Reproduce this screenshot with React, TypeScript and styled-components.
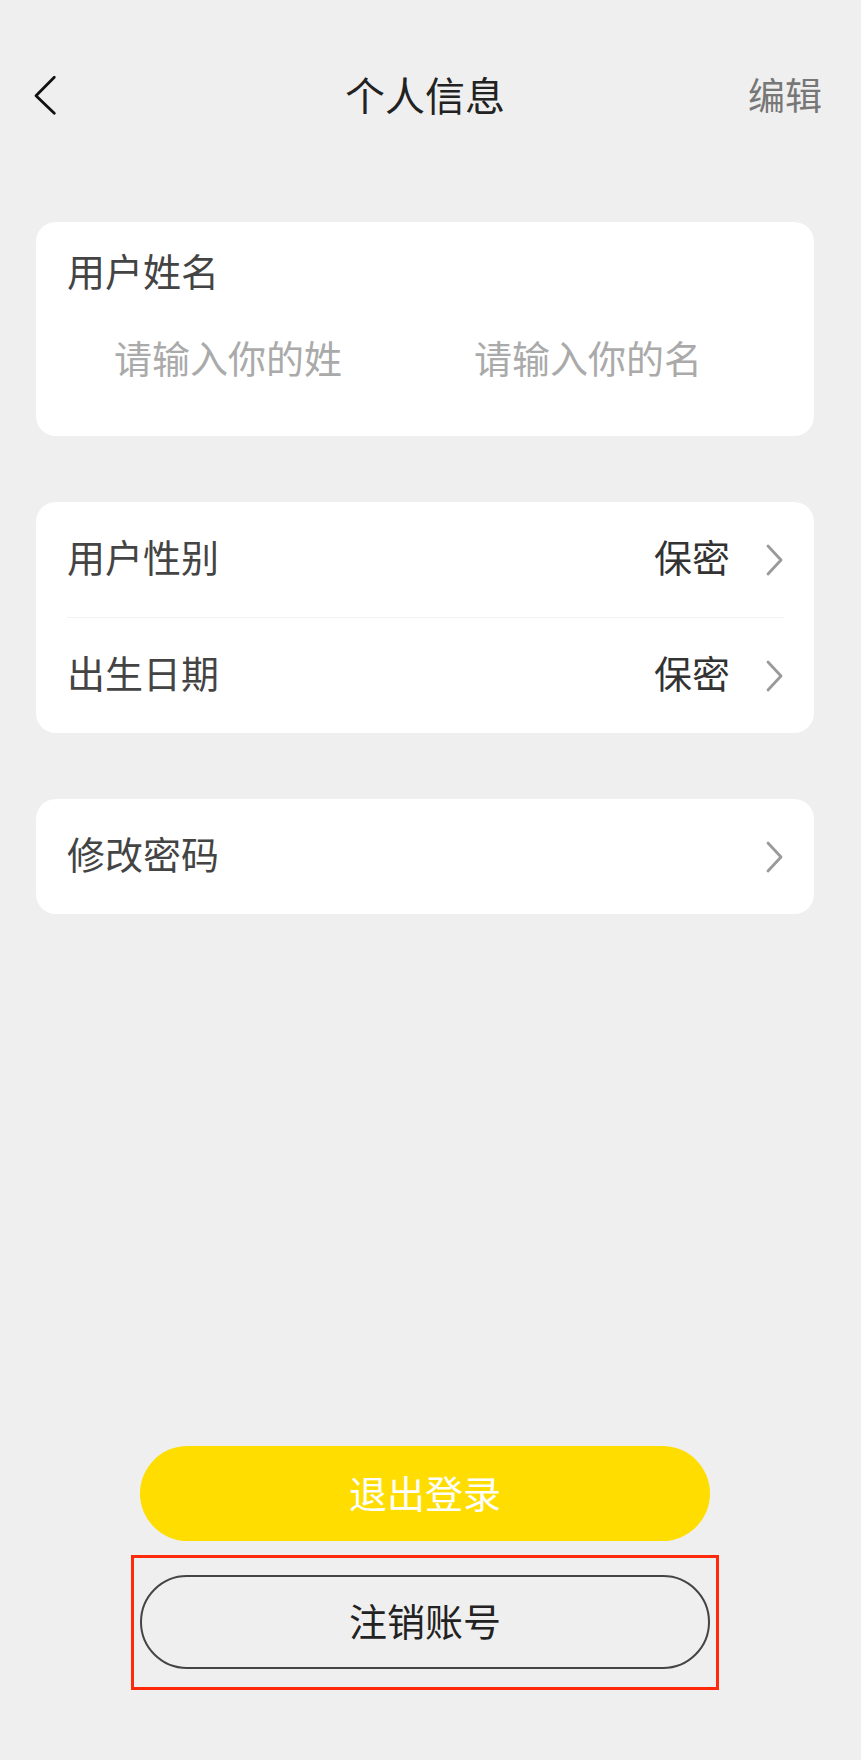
import React from "react";
import styled, { createGlobalStyle } from "styled-components";

const GlobalStyle = createGlobalStyle`
  html, body {
    margin: 0;
    padding: 0;
    background: #efefef;
  }
  body {
    font-family: "Noto Sans CJK SC", "Noto Sans", "Liberation Sans", sans-serif;
  }
  * { box-sizing: border-box; }
`;

const Page = styled.div`
  width: 850px;
  min-height: 1760px;
  display: flex;
  flex-direction: column;
  background: #efefef;
`;

const Header = styled.header`
  display: grid;
  grid-template-columns: 1fr auto 1fr;
  align-items: center;
  height: 80px;
  margin-top: 56px;
`;

const BackButton = styled.button`
  justify-self: start;
  display: flex;
  align-items: center;
  background: none;
  border: none;
  padding: 0 0 0 34px;
  margin: 0;
  cursor: pointer;
`;

const Title = styled.h1`
  margin: 0;
  font-size: 40px;
  font-weight: 400;
  line-height: 52px;
  padding-bottom: 4px;
  color: #222;
`;

const EditLink = styled.span`
  justify-self: end;
  padding: 0 28px 4px 0;
  font-size: 37px;
  line-height: 52px;
  color: #777;
`;

const Content = styled.main`
  padding: 86px 36px 0;
  display: flex;
  flex-direction: column;
  gap: 66px;
`;

const NameCard = styled.section`
  background: #fff;
  border-radius: 20px;
  height: 214px;
  padding: 22px 31px 0;
`;

const Label = styled.div`
  font-size: 38px;
  line-height: 52px;
  color: #444;
`;

const InputRow = styled.div`
  display: flex;
  gap: 132px;
  margin-top: 34px;
  padding-left: 47px;
`;

const NameInput = styled.input`
  width: 228px;
  height: 52px;
  padding: 0;
  border: none;
  outline: none;
  background: transparent;
  font-family: inherit;
  font-size: 38px;
  color: #333;
  &::placeholder {
    color: #aaa;
  }
`;

const ListCard = styled.section`
  background: #fff;
  border-radius: 20px;
  padding: 0 30px 0 31px;
`;

const Row = styled.div`
  display: flex;
  align-items: center;
  height: 115px;
  & + & {
    height: 116px;
    border-top: 1px solid #f2f2f2;
  }
`;

const RowLabel = styled.span`
  flex: 1;
  font-size: 38px;
  line-height: 52px;
  padding-bottom: 7px;
  color: #444;
`;

const RowValue = styled.span`
  font-size: 38px;
  line-height: 52px;
  padding-bottom: 7px;
  color: #333;
  margin-right: 34px;
`;

const Footer = styled.footer`
  margin-top: auto;
  padding-bottom: 70px;
  display: flex;
  flex-direction: column;
  align-items: center;
  gap: 14px;
`;

const PrimaryButton = styled.button`
  width: 570px;
  height: 95px;
  border: none;
  border-radius: 48px;
  background: #ffdd00;
  color: #fff;
  font-family: inherit;
  font-size: 38px;
  padding: 0 0 5px;
  cursor: pointer;
`;

const HighlightFrame = styled.div`
  border: 3px solid #ff2a0b;
  padding: 17px 6px 18px;
`;

const OutlineButton = styled.button`
  display: block;
  width: 570px;
  height: 94px;
  border: 2px solid #444;
  border-radius: 47px;
  background: transparent;
  color: #222;
  font-family: inherit;
  font-size: 38px;
  padding: 0 0 5px;
  cursor: pointer;
`;

const BackIcon = () => (
  <svg width="24" height="42" viewBox="0 0 24 42" fill="none">
    <path d="M20.3 2.3 L2 20.7 L20.3 38.3" stroke="#111" strokeWidth="2.8" strokeLinecap="round" strokeLinejoin="round" />
  </svg>
);

const Chevron = () => (
  <svg width="20" height="32" viewBox="0 0 20 32" fill="none">
    <path d="M4 2 L17 16 L4 30" stroke="#9a9a9a" strokeWidth="2.8" strokeLinecap="round" strokeLinejoin="round" />
  </svg>
);

const rows = [
  { label: "用户性别", value: "保密" },
  { label: "出生日期", value: "保密" },
];

export default function App() {
  return (
    <>
      <GlobalStyle />
      <Page>
        <Header>
          <BackButton aria-label="返回">
            <BackIcon />
          </BackButton>
          <Title>个人信息</Title>
          <EditLink>编辑</EditLink>
        </Header>
        <Content>
          <NameCard>
            <Label>用户姓名</Label>
            <InputRow>
              <NameInput placeholder="请输入你的姓" />
              <NameInput placeholder="请输入你的名" />
            </InputRow>
          </NameCard>
          <ListCard>
            {rows.map((r) => (
              <Row key={r.label}>
                <RowLabel>{r.label}</RowLabel>
                <RowValue>{r.value}</RowValue>
                <Chevron />
              </Row>
            ))}
          </ListCard>
          <ListCard>
            <Row>
              <RowLabel>修改密码</RowLabel>
              <Chevron />
            </Row>
          </ListCard>
        </Content>
        <Footer>
          <PrimaryButton>退出登录</PrimaryButton>
          <HighlightFrame>
            <OutlineButton>注销账号</OutlineButton>
          </HighlightFrame>
        </Footer>
      </Page>
    </>
  );
}
